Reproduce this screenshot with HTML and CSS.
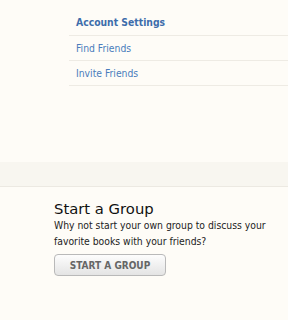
FILE: index.html
```html
<!DOCTYPE html>
<html lang="en">
<head>
    <meta charset="UTF-8">
    <meta name="viewport" content="width=device-width, initial-scale=1.0">
    <title>Friends</title>
    <link rel="stylesheet" href="styles.css">
</head>
<body>

<ul class="side-menu">
    <li class="menu-title"><a href="#">Account Settings</a></li>
    <li><a href="#">Find Friends</a></li>
    <li><a href="#">Invite Friends</a></li>
</ul>

<div class="band"></div>

<div class="start-group">
    <h2>Start a Group</h2>
    <p>Why not start your own group to discuss your favorite books with your friends?</p>
    <button type="button" class="group-button">START A GROUP</button>
</div>

</body>
</html>
```

FILE: styles.css
```css
body {
    font-family: "DejaVu Sans Condensed", "DejaVu Sans", sans-serif;
    margin: 0;
    background-color: #fefcf7;
    color: #222;
}
.side-menu {
    list-style: none;
    margin: 0 0 0 69px;
    padding: 11px 0 0 0;
}
.side-menu li {
    height: 24px;
    line-height: 24px;
    border-bottom: 1px solid #eeebe4;
    padding-left: 7px;
    font-size: 10.3px;
}
.side-menu li.menu-title {
    font-weight: bold;
    height: 22px;
    line-height: 22px;
    padding-bottom: 2px;
}
.side-menu a {
    color: #4a7cbc;
    text-decoration: none;
}
.menu-title a {
    color: #3d6dab;
}
.band {
    margin-top: 76px;
    height: 24px;
    background-color: #f8f6f0;
    border-bottom: 1px solid #ece9e2;
}
.start-group {
    padding: 13px 0 0 54px;
}
.start-group h2 {
    margin: 0;
    font-family: "DejaVu Sans", sans-serif;
    font-weight: normal;
    font-size: 14.8px;
    line-height: 17px;
    color: #111;
}
.start-group p {
    margin: 0;
    font-size: 10.3px;
    line-height: 16px;
    width: 224px;
    color: #222;
}
.group-button {
    margin-top: 5px;
    width: 112px;
    height: 22px;
    font-family: "DejaVu Sans Condensed", "DejaVu Sans", sans-serif;
    font-weight: bold;
    font-size: 10px;
    color: #666;
    background: linear-gradient(#fdfdfd, #e4e4e4);
    border: 1px solid #b9b9b9;
    border-radius: 4px;
    cursor: pointer;
}
```
